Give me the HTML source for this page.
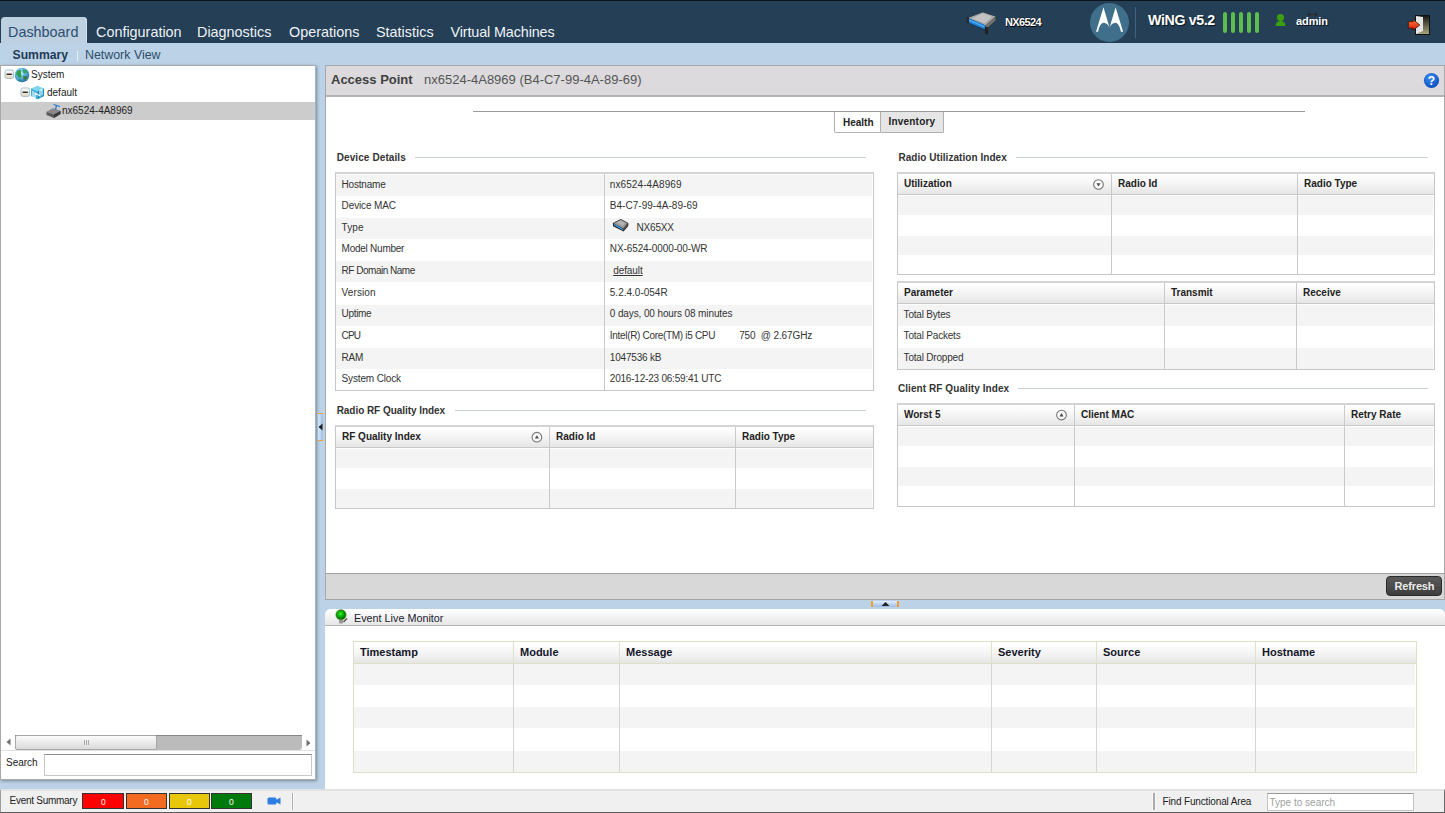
<!DOCTYPE html>
<html><head><meta charset="utf-8">
<style>
*{box-sizing:border-box;margin:0;padding:0}
html,body{width:1445px;height:813px;overflow:hidden}
body{position:relative;background:#bcd2e6;font-family:"Liberation Sans",sans-serif;color:#333}
.a{position:absolute}
.t{position:absolute;white-space:pre;line-height:1}
/* header */
#hdr{left:0;top:0;width:1445px;height:43px;background:#243f56;border-top:1px solid #0c141b}
.nav{font-size:14.4px;color:#eef3f7;top:24.5px}
#tab{left:1px;top:17px;width:86px;height:26px;background:#bdd0e0;border-radius:4px 4px 0 0;box-shadow:inset -1px 0 0 #d4e2ee}
/* left panel */
#lp{left:0;top:65px;width:316px;height:715px;background:#fff;border:1px solid #a9a9a9;box-shadow:1px 1px 3px rgba(0,0,0,.35)}
.tree{font-size:10px;color:#222}
/* main panel */
#mp{left:325px;top:65px;width:1120px;height:535px;background:#fff;border:1px solid #a8a8a8}
#ttl{left:0;top:0;width:1118px;height:31px;background:#dcdadd;border-bottom:2px solid #b4b3b6}
</style></head><body>

<!-- HEADER -->
<div id="hdr" class="a"></div>
<div id="tab" class="a"></div>
<div class="t nav" style="left:8px;color:#2c4e70">Dashboard</div>
<div class="t nav" style="left:96px">Configuration</div>
<div class="t nav" style="left:197px">Diagnostics</div>
<div class="t nav" style="left:289px">Operations</div>
<div class="t nav" style="left:376px">Statistics</div>
<div class="t nav" style="left:450.5px;letter-spacing:-0.13px">Virtual Machines</div>


<!-- header right -->
<svg class="a" style="left:966px;top:11px" width="32" height="25" viewBox="0 0 32 25">
  <path d="M2 7 L16.8 1 L29.8 5.6 L29.8 10 L19.8 19.5 L2 11.5 Z" fill="#111" opacity="0.6"/>
  <path d="M2 7 L16.8 1.2 L29.6 5.6 L19.6 14.4 Z" fill="#a8a8a8"/>
  <path d="M6 7.2 L16.8 2.6 L26 5.8 L18.8 12.2 Z" fill="#c2c2c2"/>
  <path d="M2 7 L19.6 14.4 L19.6 18.8 L2 11.2 Z" fill="#1e86e0"/>
  <path d="M3 8.6 L18.6 15.2 L18.6 16.4 L3 9.8 Z" fill="#4fb0ff"/>
  <path d="M19.6 14.4 L29.6 5.6 L29.6 9.8 L19.6 18.8 Z" fill="#707070"/>
  <path d="M0.5 5.8 L3 6.6 L3 12.5 L0.5 11.6 Z" fill="#2a2a2a"/>
  <path d="M18.8 15.6 L22 16.6 L22 23.6 L18.8 22.6 Z" fill="#222"/>
</svg>
<div class="t" style="left:1005px;top:17px;font-size:11px;font-weight:bold;color:#fff;letter-spacing:-0.65px;text-shadow:0 0 1px #000,0.5px 0.5px 0 #000">NX6524</div>
<div class="a" style="left:1090px;top:3px;width:39px;height:39px;border-radius:50%;background:#3f6f8b"></div>
<svg class="a" style="left:1088px;top:2px" width="44" height="42" viewBox="0 0 44 42">
  <path d="M8 29.7 L15.5 5.2 L21.5 25.8 L27.6 5.2 L35.1 29.7 L32.9 29.7 C32 25 30 20.7 27.3 20.7 C24.6 20.7 22.6 23 21.5 25.8 C20.4 23 18.4 20.7 15.8 20.7 C13 20.7 11 25 10.1 29.7 Z" fill="#fff"/>
</svg>
<div class="a" style="left:1135px;top:7px;width:1px;height:31px;background:#3c6680"></div>
<div class="t" style="left:1148px;top:12.5px;font-size:14.2px;letter-spacing:-0.35px;font-weight:bold;color:#fff;text-shadow:1px 1px 1px #0a1520">WiNG v5.2</div>
<div class="a" style="left:1223px;top:12px;width:4.3px;height:21px;border-radius:2.1px;background:#5cbf4c"></div>
<div class="a" style="left:1231px;top:12px;width:4.3px;height:21px;border-radius:2.1px;background:#5cbf4c"></div>
<div class="a" style="left:1239px;top:12px;width:4.3px;height:21px;border-radius:2.1px;background:#5cbf4c"></div>
<div class="a" style="left:1247px;top:12px;width:4.3px;height:21px;border-radius:2.1px;background:#5cbf4c"></div>
<div class="a" style="left:1255px;top:12px;width:4.3px;height:21px;border-radius:2.1px;background:#5cbf4c"></div>
<svg class="a" style="left:1275px;top:13px" width="11" height="14" viewBox="0 0 11 14">
  <circle cx="5.5" cy="4.5" r="3.6" fill="#3aa010"/>
  <path d="M0.5 13 C1 9 3 8 5.5 8 C8 8 10 9 10.5 13 Z" fill="#3aa010"/>
</svg>
<div class="t" style="left:1296px;top:15.5px;font-size:11px;font-weight:bold;color:#fff;letter-spacing:-0.1px;text-shadow:1px 1px 0 #0a1520">admin</div>
<svg class="a" style="left:1306px;top:11px" width="13" height="7" viewBox="0 0 13 7">
  <path d="M1 3.5 L4 1 L4 3 L9 3 L9 1 L12 3.5 L9 6 L9 4 L4 4 L4 6 Z" fill="#2a2a2a"/>
</svg>
<svg class="a" style="left:1407px;top:14px" width="24" height="22" viewBox="0 0 24 22">
  <rect x="8" y="1" width="15" height="20" fill="#111"/>
  <defs><linearGradient id="dg" x1="0" y1="0" x2="0" y2="1"><stop offset="0" stop-color="#1a1a14"/><stop offset="1" stop-color="#a8a47c"/></linearGradient></defs><rect x="9" y="2" width="13" height="18" fill="url(#dg)"/>
  <path d="M9 2 L16 3 L16 17 L9 20 Z" fill="#e6e6e6"/>
  <defs><linearGradient id="ag" x1="0" y1="0" x2="0" y2="1"><stop offset="0" stop-color="#ff7a30"/><stop offset="1" stop-color="#d01808"/></linearGradient></defs><path d="M1.3 7.6 L6.2 7.6 L6.2 5.6 L12.9 11 L6.2 16.3 L6.2 14.2 L1.3 14.2 Z" fill="url(#ag)" stroke="#2a0800" stroke-width="0.7"/>
</svg>

<!-- sub bar -->
<div class="t" style="left:12.5px;top:49px;font-size:12.2px;font-weight:bold;color:#1f3a56">Summary</div>
<div class="a" style="left:77px;top:51px;width:1px;height:10px;background:#eaf2f9"></div>
<div class="t" style="left:85px;top:49px;font-size:12.4px;color:#2d4d6c">Network View</div>

<!-- LEFT PANEL -->
<div id="lp" class="a"></div>
<div class="a" style="left:1px;top:102px;width:314px;height:18px;background:#cccccc"></div>
<div class="t tree" style="left:31px;top:70px">System</div>
<div class="t tree" style="left:47px;top:88px">default</div>
<div class="t tree" style="left:62px;top:106px">nx6524-4A8969</div>

<!-- MAIN PANEL -->
<div id="mp" class="a">
  <div id="ttl" class="a"></div>
</div>
<div class="t" style="left:331px;top:73px;font-size:13px;font-weight:bold;color:#404040">Access Point</div>
<div class="t" style="left:424px;top:73px;font-size:13px;color:#555">nx6524-4A8969 (B4-C7-99-4A-89-69)</div>


<!-- title bar -->
<svg class="a" style="left:1423px;top:72px" width="17" height="17" viewBox="0 0 17 17">
  <defs><radialGradient id="hg" cx="40%" cy="30%" r="70%"><stop offset="0" stop-color="#3d8cf0"/><stop offset="1" stop-color="#0a4fbf"/></radialGradient></defs>
  <circle cx="8.5" cy="8.5" r="7.6" fill="url(#hg)"/>
  <text x="8.5" y="13" text-anchor="middle" font-family="Liberation Sans" font-weight="bold" font-size="12" fill="#fff">?</text>
</svg>
<div class="a" style="left:834px;top:111px;width:47px;height:22px;background:#fff;border:1px solid #b0b0b0;border-top:none;border-radius:0 0 2px 2px"></div>
<div class="a" style="left:880px;top:111px;width:64px;height:22px;background:#e6e6e6;border:1px solid #b0b0b0;border-top:none;border-radius:0 0 2px 2px"></div>
<div class="a" style="left:473px;top:111px;width:832px;height:1px;background:#9a9a9a"></div>
<div class="t" style="left:843px;top:118px;font-size:10px;font-weight:bold;color:#222">Health</div>
<div class="t" style="left:888.5px;top:117px;font-size:10px;font-weight:bold;color:#222;letter-spacing:0.2px">Inventory</div>


<!-- main bottom bar -->
<div class="a" style="left:326px;top:573px;width:1118px;height:27px;background:#d8d8d8;border-top:1px solid #a4a4a4;border-bottom:1px solid #a4a4a4"></div>
<div class="a" style="left:1386px;top:576px;width:56px;height:20px;border-radius:4px;background:linear-gradient(#5a5a5a,#3e3e3e);border:1px solid #2a2a2a"></div>
<div class="t" style="left:1394.5px;top:581px;font-size:11px;font-weight:bold;color:#ececec;letter-spacing:-0.15px">Refresh</div>

<!-- splitter handles -->
<div class="a" style="left:315px;top:65px;width:1px;height:715px;background:#9fb3c6"></div>
<div class="a" style="left:318px;top:413px;width:5px;height:28px;background:linear-gradient(90deg,#d8e8fa,#9fbbe0);border-top:1.5px solid #f0a030;border-bottom:1.5px solid #f0a030"></div>
<svg class="a" style="left:318px;top:423px" width="5" height="8" viewBox="0 0 5 8"><path d="M4.5 0.5 L0.5 4 L4.5 7.5 Z" fill="#222"/></svg>
<div class="a" style="left:871px;top:601px;width:28px;height:6px;background:linear-gradient(#e0eeff,#9cbce6);border-left:2px solid #f0a030;border-right:2px solid #f0a030"></div>
<svg class="a" style="left:881px;top:601px" width="9" height="6" viewBox="0 0 9 6"><path d="M0.5 5 L4.5 1 L8.5 5 Z" fill="#222"/></svg>

<!-- event live monitor -->
<div class="a" style="left:325px;top:609px;width:1120px;height:180px;background:#fff;border-radius:6px 6px 0 0"></div>
<div class="a" style="left:325px;top:609px;width:1120px;height:17px;background:linear-gradient(#ffffff,#e6e6e6);border-bottom:1px solid #b4b4b4;border-radius:6px 6px 0 0"></div>
<svg class="a" style="left:333px;top:608px" width="17" height="17" viewBox="0 0 17 17">
  <defs><radialGradient id="gb" cx="45%" cy="40%" r="60%"><stop offset="0" stop-color="#30f030"/><stop offset="0.55" stop-color="#00a800"/><stop offset="1" stop-color="#005a00"/></radialGradient></defs>
  <circle cx="8" cy="7" r="6" fill="#7fff7f" opacity="0.35"/>
  <path d="M6 12 L10 12 L10 15.5 L6 15.5 Z" fill="#9a9a9a"/>
  <path d="M10.5 14 L14 10.5" stroke="#555" stroke-width="1.4"/>
  <circle cx="8" cy="6.8" r="5" fill="url(#gb)" stroke="#6a5a20" stroke-width="0.6"/>
</svg>
<div class="t" style="left:354px;top:613px;font-size:10.8px;color:#1a1a30">Event Live Monitor</div>



<!-- left panel details -->
<svg class="a" style="left:4px;top:69px" width="11" height="11" viewBox="0 0 11 11">
  <defs><linearGradient id="mb" x1="0" y1="0" x2="0" y2="1"><stop offset="0" stop-color="#ffffff"/><stop offset="1" stop-color="#e0d8c0"/></linearGradient></defs>
  <rect x="1" y="1" width="8.4" height="8.4" rx="1.6" fill="url(#mb)" stroke="#a8bccc" stroke-width="1"/>
  <rect x="2.6" y="4.6" width="5.2" height="1.3" fill="#151515"/>
</svg>
<svg class="a" style="left:20px;top:87px" width="11" height="11" viewBox="0 0 11 11">
  <defs><linearGradient id="mb" x1="0" y1="0" x2="0" y2="1"><stop offset="0" stop-color="#ffffff"/><stop offset="1" stop-color="#e0d8c0"/></linearGradient></defs>
  <rect x="1" y="1" width="8.4" height="8.4" rx="1.6" fill="url(#mb)" stroke="#a8bccc" stroke-width="1"/>
  <rect x="2.6" y="4.6" width="5.2" height="1.3" fill="#151515"/>
</svg>
<svg class="a" style="left:14px;top:67px" width="16" height="16" viewBox="0 0 16 16">
  <defs><radialGradient id="gl" cx="40%" cy="35%" r="65%"><stop offset="0" stop-color="#c8f0ff"/><stop offset="0.55" stop-color="#58b0e4"/><stop offset="1" stop-color="#2a74b4"/></radialGradient></defs>
  <circle cx="8" cy="8" r="7.3" fill="url(#gl)"/>
  <path d="M2.2 6 C3 3.5 5.5 2.5 7 3.5 C7.6 5 6.2 6.2 7.2 7.8 C8.2 9.4 6.6 11.6 5.2 11 C3.8 10.2 3.6 8.4 2.2 7.6 Z" fill="#2e9e50"/>
  <path d="M8.6 2.4 C10.8 2.2 13 3.6 13.8 5.8 C12.6 6.4 11.2 5.6 10.4 6.8 C9.4 6.4 8.4 4.4 8.6 2.4 Z" fill="#34a858"/>
  <path d="M9 9 C10.6 8.2 13.2 8.8 13.4 10.8 C12.6 12.8 10.6 13.6 9.6 12.6 C8.8 11.6 9.6 10.4 9 9 Z" fill="#3a8040"/>
  <path d="M4.5 12.5 C5.5 12 7 12.4 7.5 13.5 C6.5 14.4 5 14 4.5 12.5 Z" fill="#2e9050"/>
</svg>
<svg class="a" style="left:30px;top:85px" width="15" height="15" viewBox="0 0 15 15">
  <path d="M7.5 0.8 L14 3.5 L14 11 L7.5 14.2 L1 11 L1 3.5 Z" fill="#7fd8f0"/>
  <path d="M1 3.5 L7.5 6.5 L7.5 14.2 L1 11 Z" fill="#3fb0d8"/>
  <path d="M7.5 6.5 L14 3.5 L14 11 L7.5 14.2 Z" fill="#1a8ec0"/>
  <path d="M3 6 L3 12 L5 13 L5 8 L10 11 L10 5.5 L12 4.5 L12 10.5" fill="none" stroke="#e8f8ff" stroke-width="1.2"/>
</svg>
<svg class="a" style="left:45px;top:103px" width="17" height="16" viewBox="0 0 17 16">
  <path d="M1.5 9 L8 5.5 L15.5 8 L15.5 11 L9 15 L1.5 12 Z" fill="#5a5a5a"/>
  <path d="M1.5 9 L8 5.5 L15.5 8 L9 11.5 Z" fill="#8a8a8a"/>
  <path d="M9 11.5 L15.5 8 L15.5 11 L9 15 Z" fill="#3a3a3a"/>
  <path d="M8.5 1.5 L15 3.5 M11.5 2.5 L10.5 6.5" stroke="#2a78c8" stroke-width="1.3" fill="none"/>
</svg>

<!-- scrollbar -->
<svg class="a" style="left:6px;top:738px" width="5" height="8" viewBox="0 0 5 8"><path d="M4.5 0.5 L0.5 4 L4.5 7.5 Z" fill="#707070"/></svg>
<div class="a" style="left:15px;top:735px;width:287px;height:15px;background:#bbbbbb;border-top:1px solid #888;border-radius:0 0 3px 3px"></div>
<div class="a" style="left:15px;top:735px;width:142px;height:15px;background:linear-gradient(#fbfbfb,#dadada);border:1px solid #a8a8a8;border-radius:2px"></div>
<div class="a" style="left:84px;top:740px;width:1px;height:5px;background:#aaa;box-shadow:2px 0 0 #aaa,4px 0 0 #aaa"></div>
<svg class="a" style="left:306px;top:739px" width="5" height="8" viewBox="0 0 5 8"><path d="M0.5 0.5 L4.5 4 L0.5 7.5 Z" fill="#707070"/></svg>
<div class="a" style="left:1px;top:750px;width:314px;height:1px;background:#e0e0e0"></div>
<div class="t" style="left:6px;top:758px;font-size:10px;color:#222">Search</div>
<div class="a" style="left:44px;top:754px;width:268px;height:22px;background:#fff;border:1px solid #c8c8c8;border-top:1px solid #8c8c8c"></div>

<!-- footer -->
<div class="a" style="left:0;top:789px;width:1445px;height:24px;background:#f0f0f0;border-top:2px solid #e2e2e2;border-bottom:1px solid #5a5a5a;border-right:1px solid #6a6a6a;border-left:1px solid #9a9a9a"></div>
<div class="t" style="left:9.5px;top:796px;font-size:10px;letter-spacing:-0.27px;color:#222">Event Summary</div>
<div class="a" style="left:82px;top:793px;width:42px;height:16px;background:#ff0000;border:1px solid #333"></div>
<div class="a" style="left:126px;top:793px;width:41px;height:16px;background:#f26b21;border:1px solid #333"></div>
<div class="a" style="left:169px;top:793px;width:41px;height:16px;background:#e8c70a;border:1px solid #333"></div>
<div class="a" style="left:211px;top:793px;width:41px;height:16px;background:#007a0a;border:1px solid #333"></div>
<div class="t" style="left:101px;top:797.5px;font-size:8.5px;color:#fff">0</div>
<div class="t" style="left:144px;top:797.5px;font-size:8.5px;color:#fff">0</div>
<div class="t" style="left:187px;top:797.5px;font-size:8.5px;color:#fff">0</div>
<div class="t" style="left:229px;top:797.5px;font-size:8.5px;color:#fff">0</div>
<svg class="a" style="left:267px;top:796px" width="15" height="10" viewBox="0 0 15 10">
  <rect x="0.5" y="1.5" width="9" height="7" rx="1.5" fill="#2b7de0"/>
  <path d="M9 4 L13.5 1.5 L13.5 8.5 L9 6 Z" fill="#2b7de0"/>
</svg>
<div class="a" style="left:291.5px;top:793px;width:1.5px;height:17px;background:#ababab;box-shadow:1px 0 0 #fafafa,-1px 0 0 #fafafa"></div>
<div class="a" style="left:1153px;top:793px;width:1.5px;height:17px;background:#ababab;box-shadow:1px 0 0 #fafafa,-1px 0 0 #fafafa"></div>
<div class="t" style="left:1162.5px;top:797px;font-size:10px;letter-spacing:-0.15px;color:#222">Find Functional Area</div>
<div class="a" style="left:1267px;top:793px;width:147px;height:18px;background:#fff;border:1px solid #c4c4c4;border-top:1px solid #9a9a9a"></div>
<div class="t" style="left:1269.5px;top:798px;font-size:10px;color:#a0a0a0">Type to search</div>

<!--GEN-->
<div class="t" style="left:336.7px;top:152.7px;font-size:10px;font-weight:bold;color:#333;letter-spacing:0.1px">Device Details</div>
<div class="a" style="left:415px;top:157px;width:451px;height:1px;background:#c9d0d0"></div>
<div class="a" style="left:335px;top:172px;width:539px;height:219px;background:#fff;border:1px solid #c4c6c8;border-top:2px solid #d2d4d6"></div>
<div class="a" style="left:336px;top:174.6px;width:535.5px;height:21.050000000000004px;background:#f4f4f4"></div>
<div class="a" style="left:336px;top:217.9px;width:535.5px;height:21.049999999999976px;background:#f4f4f4"></div>
<div class="a" style="left:336px;top:261.20000000000005px;width:535.5px;height:21.049999999999976px;background:#f4f4f4"></div>
<div class="a" style="left:336px;top:304.5px;width:535.5px;height:21.049999999999976px;background:#f4f4f4"></div>
<div class="a" style="left:336px;top:347.8px;width:535.5px;height:21.050000000000033px;background:#f4f4f4"></div>
<div class="a" style="left:604px;top:174px;width:1px;height:216px;background:#c8cacc"></div>
<div class="t" style="left:341.6px;top:179.52499999999998px;font-size:10px;color:#333;letter-spacing:-0.21px">Hostname</div>
<div class="t" style="left:609.8px;top:179.52499999999998px;font-size:10px;color:#333;letter-spacing:0.09px">nx6524-4A8969</div>
<div class="t" style="left:341.6px;top:201.175px;font-size:10px;color:#333;letter-spacing:-0.12px">Device MAC</div>
<div class="t" style="left:609.8px;top:201.175px;font-size:10px;color:#333;letter-spacing:0.03px">B4-C7-99-4A-89-69</div>
<div class="t" style="left:341.6px;top:222.825px;font-size:10px;color:#333;letter-spacing:0.1px">Type</div>
<div class="t" style="left:341.6px;top:244.475px;font-size:10px;color:#333;letter-spacing:-0.25px">Model Number</div>
<div class="t" style="left:609.8px;top:244.475px;font-size:10px;color:#333;letter-spacing:-0.1px">NX-6524-0000-00-WR</div>
<div class="t" style="left:341.6px;top:266.125px;font-size:10px;color:#333;letter-spacing:-0.49px">RF Domain Name</div>
<div class="t" style="left:341.6px;top:287.775px;font-size:10px;color:#333;letter-spacing:0.1px">Version</div>
<div class="t" style="left:609.8px;top:287.775px;font-size:10px;color:#333;letter-spacing:0px">5.2.4.0-054R</div>
<div class="t" style="left:341.6px;top:309.42499999999995px;font-size:10px;color:#333;letter-spacing:-0.34px">Uptime</div>
<div class="t" style="left:609.8px;top:309.42499999999995px;font-size:10px;color:#333;letter-spacing:-0.115px">0 days, 00 hours 08 minutes</div>
<div class="t" style="left:341.6px;top:331.075px;font-size:10px;color:#333;letter-spacing:-0.9px">CPU</div>
<div class="t" style="left:341.6px;top:352.72499999999997px;font-size:10px;color:#333;letter-spacing:-0.3px">RAM</div>
<div class="t" style="left:609.8px;top:352.72499999999997px;font-size:10px;color:#333;letter-spacing:-0.19px">1047536 kB</div>
<div class="t" style="left:341.6px;top:374.375px;font-size:10px;color:#333;letter-spacing:-0.15px">System Clock</div>
<div class="t" style="left:609.8px;top:374.375px;font-size:10px;color:#333;letter-spacing:-0.21px">2016-12-23 06:59:41 UTC</div>
<div class="t" style="left:636.6px;top:222.825px;font-size:10px;color:#333;letter-spacing:-0.2px">NX65XX</div>
<div class="t" style="left:613.2px;top:266.125px;font-size:10px;color:#333;letter-spacing:-0.08px"><u>default</u></div>
<div class="t" style="left:609.8px;top:331.075px;font-size:10px;color:#333;letter-spacing:-0.31px">Intel(R) Core(TM) i5 CPU</div>
<div class="t" style="left:739.2px;top:331.075px;font-size:10px;color:#333;letter-spacing:-0.15px">750</div>
<div class="t" style="left:760.7px;top:331.075px;font-size:10px;color:#333;letter-spacing:-0.1px">@ 2.67GHz</div>
<svg class="a" style="left:612px;top:218px" width="17" height="15" viewBox="0 0 17 15">
<path d="M0.8 5 L8.8 1 L16.3 5 L16.3 8 L11.5 13.6 L1 8.2 Z" fill="#2a2a2a"/>
<path d="M1.6 5.2 L8.8 1.8 L15.5 5.3 L11.3 10.6 Z" fill="#9a9a9a"/>
<path d="M5 4.6 L8.8 2.8 L13 5 L10.6 8 Z" fill="#b4b4b4"/>
<path d="M2 5.8 L11 10.9 L11 12.3 L2 7.3 Z" fill="#3aa2f2"/>
<path d="M11.3 10.6 L15.5 5.3 L15.5 7.6 L11.3 12.6 Z" fill="#555"/>
</svg>
<div class="t" style="left:336.7px;top:405.7px;font-size:10px;font-weight:bold;color:#333;letter-spacing:-0.05px">Radio RF Quality Index</div>
<div class="a" style="left:455px;top:410px;width:411px;height:1px;background:#c9d0d0"></div>
<div class="a" style="left:335px;top:425px;width:539px;height:84px;background:#fff;border:1px solid #c4c6c8;border-top:2px solid #d2d4d6"></div>
<div class="a" style="left:336px;top:427px;width:537px;height:20px;background:linear-gradient(#ffffff 0%,#f7f7f7 40%,#e6e6e6 100%)"></div>
<div class="a" style="left:336px;top:447px;width:537px;height:1px;background:#c8c8c8"></div>
<div class="a" style="left:336px;top:448.6px;width:535.5px;height:19.70000000000001px;background:#f4f4f4"></div>
<div class="a" style="left:336px;top:488.6px;width:535.5px;height:19.4px;background:#f4f4f4"></div>
<div class="a" style="left:549px;top:427px;width:1px;height:81px;background:#c8cacc"></div>
<div class="a" style="left:735px;top:427px;width:1px;height:81px;background:#c8cacc"></div>
<div class="t" style="left:342px;top:432.4px;font-size:10px;font-weight:bold;color:#222">RF Quality Index</div>
<div class="t" style="left:556px;top:432.4px;font-size:10px;font-weight:bold;color:#222">Radio Id</div>
<div class="t" style="left:742px;top:432.4px;font-size:10px;font-weight:bold;color:#222">Radio Type</div>
<svg class="a" style="left:0;top:0;overflow:visible" width="1" height="1"><circle cx="536.9" cy="437.2" r="4.85" fill="#fbfbfb" stroke="#727272" stroke-width="1.05"/><path d="M534.8,438.59999999999997 L539.0,438.59999999999997 L536.9,435.3 Z" fill="#505050"/></svg>
<div class="t" style="left:898.4px;top:152.7px;font-size:10px;font-weight:bold;color:#333;letter-spacing:0.05px">Radio Utilization Index</div>
<div class="a" style="left:1016px;top:157px;width:412px;height:1px;background:#c9d0d0"></div>
<div class="a" style="left:897px;top:172px;width:538px;height:103px;background:#fff;border:1px solid #c4c6c8;border-top:2px solid #d2d4d6"></div>
<div class="a" style="left:898px;top:174px;width:536px;height:20px;background:linear-gradient(#ffffff 0%,#f7f7f7 40%,#e6e6e6 100%)"></div>
<div class="a" style="left:898px;top:194px;width:536px;height:1px;background:#c8c8c8"></div>
<div class="a" style="left:898px;top:195.6px;width:534.5px;height:19.4px;background:#f4f4f4"></div>
<div class="a" style="left:898px;top:235.6px;width:534.5px;height:19.4px;background:#f4f4f4"></div>
<div class="a" style="left:1111px;top:174px;width:1px;height:100px;background:#c8cacc"></div>
<div class="a" style="left:1297px;top:174px;width:1px;height:100px;background:#c8cacc"></div>
<div class="t" style="left:904px;top:179.4px;font-size:10px;font-weight:bold;color:#222">Utilization</div>
<div class="t" style="left:1118px;top:179.4px;font-size:10px;font-weight:bold;color:#222">Radio Id</div>
<div class="t" style="left:1304px;top:179.4px;font-size:10px;font-weight:bold;color:#222">Radio Type</div>
<svg class="a" style="left:0;top:0;overflow:visible" width="1" height="1"><circle cx="1098.5" cy="184.5" r="4.85" fill="#fbfbfb" stroke="#727272" stroke-width="1.05"/><path d="M1096.4,183.2 L1100.6,183.2 L1098.5,186.5 Z" fill="#505050"/></svg>
<div class="a" style="left:897px;top:281px;width:538px;height:89px;background:#fff;border:1px solid #c4c6c8;border-top:2px solid #d2d4d6"></div>
<div class="a" style="left:898px;top:283px;width:536px;height:20px;background:linear-gradient(#ffffff 0%,#f7f7f7 40%,#e6e6e6 100%)"></div>
<div class="a" style="left:898px;top:303px;width:536px;height:1px;background:#c8c8c8"></div>
<div class="a" style="left:898px;top:304.6px;width:534.5px;height:21.099999999999987px;background:#f4f4f4"></div>
<div class="a" style="left:898px;top:347.90000000000003px;width:534.5px;height:21.099999999999987px;background:#f4f4f4"></div>
<div class="a" style="left:1164px;top:283px;width:1px;height:86px;background:#c8cacc"></div>
<div class="a" style="left:1296px;top:283px;width:1px;height:86px;background:#c8cacc"></div>
<div class="t" style="left:904px;top:288.4px;font-size:10px;font-weight:bold;color:#222">Parameter</div>
<div class="t" style="left:1171px;top:288.4px;font-size:10px;font-weight:bold;color:#222">Transmit</div>
<div class="t" style="left:1303px;top:288.4px;font-size:10px;font-weight:bold;color:#222">Receive</div>
<div class="t" style="left:903.6px;top:309.55px;font-size:10px;color:#333;letter-spacing:-0.2px">Total Bytes</div>
<div class="t" style="left:903.6px;top:331.2px;font-size:10px;color:#333;letter-spacing:-0.2px">Total Packets</div>
<div class="t" style="left:903.6px;top:352.84999999999997px;font-size:10px;color:#333;letter-spacing:-0.2px">Total Dropped</div>
<div class="t" style="left:897.9px;top:384.2px;font-size:10px;font-weight:bold;color:#333;letter-spacing:0.08px">Client RF Quality Index</div>
<div class="a" style="left:1018px;top:388px;width:410px;height:1px;background:#c9d0d0"></div>
<div class="a" style="left:897px;top:403px;width:538px;height:104px;background:#fff;border:1px solid #c4c6c8;border-top:2px solid #d2d4d6"></div>
<div class="a" style="left:898px;top:405px;width:536px;height:20px;background:linear-gradient(#ffffff 0%,#f7f7f7 40%,#e6e6e6 100%)"></div>
<div class="a" style="left:898px;top:425px;width:536px;height:1px;background:#c8c8c8"></div>
<div class="a" style="left:898px;top:426.6px;width:534.5px;height:19.4px;background:#f4f4f4"></div>
<div class="a" style="left:898px;top:466.6px;width:534.5px;height:19.4px;background:#f4f4f4"></div>
<div class="a" style="left:1074px;top:405px;width:1px;height:101px;background:#c8cacc"></div>
<div class="a" style="left:1344px;top:405px;width:1px;height:101px;background:#c8cacc"></div>
<div class="t" style="left:904px;top:410.4px;font-size:10px;font-weight:bold;color:#222">Worst 5</div>
<div class="t" style="left:1081px;top:410.4px;font-size:10px;font-weight:bold;color:#222">Client MAC</div>
<div class="t" style="left:1351px;top:410.4px;font-size:10px;font-weight:bold;color:#222">Retry Rate</div>
<svg class="a" style="left:0;top:0;overflow:visible" width="1" height="1"><circle cx="1061.5" cy="415" r="4.85" fill="#fbfbfb" stroke="#727272" stroke-width="1.05"/><path d="M1059.4,416.4 L1063.6,416.4 L1061.5,413.1 Z" fill="#505050"/></svg>
<div class="a" style="left:353px;top:641px;width:1064px;height:132px;background:#fff;border:1px solid #dedfc6;border-top:1px solid #dedfc6"></div>
<div class="a" style="left:354px;top:643px;width:1062px;height:20px;background:linear-gradient(#ffffff 0%,#f7f7f7 40%,#e6e6e6 100%)"></div>
<div class="a" style="left:354px;top:663px;width:1062px;height:1px;background:#dedfc6"></div>
<div class="a" style="left:354px;top:663.6px;width:1060.5px;height:21.199999999999953px;background:#f4f4f4"></div>
<div class="a" style="left:354px;top:707.2px;width:1060.5px;height:21.199999999999953px;background:#f4f4f4"></div>
<div class="a" style="left:354px;top:750.8000000000001px;width:1060.5px;height:21.199999999999953px;background:#f4f4f4"></div>
<div class="a" style="left:513px;top:643px;width:1px;height:129px;background:#d4d4d4"></div>
<div class="a" style="left:513px;top:642px;width:1px;height:22px;background:#e0e0c8"></div>
<div class="a" style="left:619px;top:643px;width:1px;height:129px;background:#d4d4d4"></div>
<div class="a" style="left:619px;top:642px;width:1px;height:22px;background:#e0e0c8"></div>
<div class="a" style="left:991px;top:643px;width:1px;height:129px;background:#d4d4d4"></div>
<div class="a" style="left:991px;top:642px;width:1px;height:22px;background:#e0e0c8"></div>
<div class="a" style="left:1096px;top:643px;width:1px;height:129px;background:#d4d4d4"></div>
<div class="a" style="left:1096px;top:642px;width:1px;height:22px;background:#e0e0c8"></div>
<div class="a" style="left:1255px;top:643px;width:1px;height:129px;background:#d4d4d4"></div>
<div class="a" style="left:1255px;top:642px;width:1px;height:22px;background:#e0e0c8"></div>
<div class="t" style="left:360px;top:647.0px;font-size:11px;font-weight:bold;color:#15152a">Timestamp</div>
<div class="t" style="left:520px;top:647.0px;font-size:11px;font-weight:bold;color:#15152a">Module</div>
<div class="t" style="left:626px;top:647.0px;font-size:11px;font-weight:bold;color:#15152a">Message</div>
<div class="t" style="left:998px;top:647.0px;font-size:11px;font-weight:bold;color:#15152a">Severity</div>
<div class="t" style="left:1103px;top:647.0px;font-size:11px;font-weight:bold;color:#15152a">Source</div>
<div class="t" style="left:1262px;top:647.0px;font-size:11px;font-weight:bold;color:#15152a">Hostname</div>
<!--/GEN-->
</body></html>
